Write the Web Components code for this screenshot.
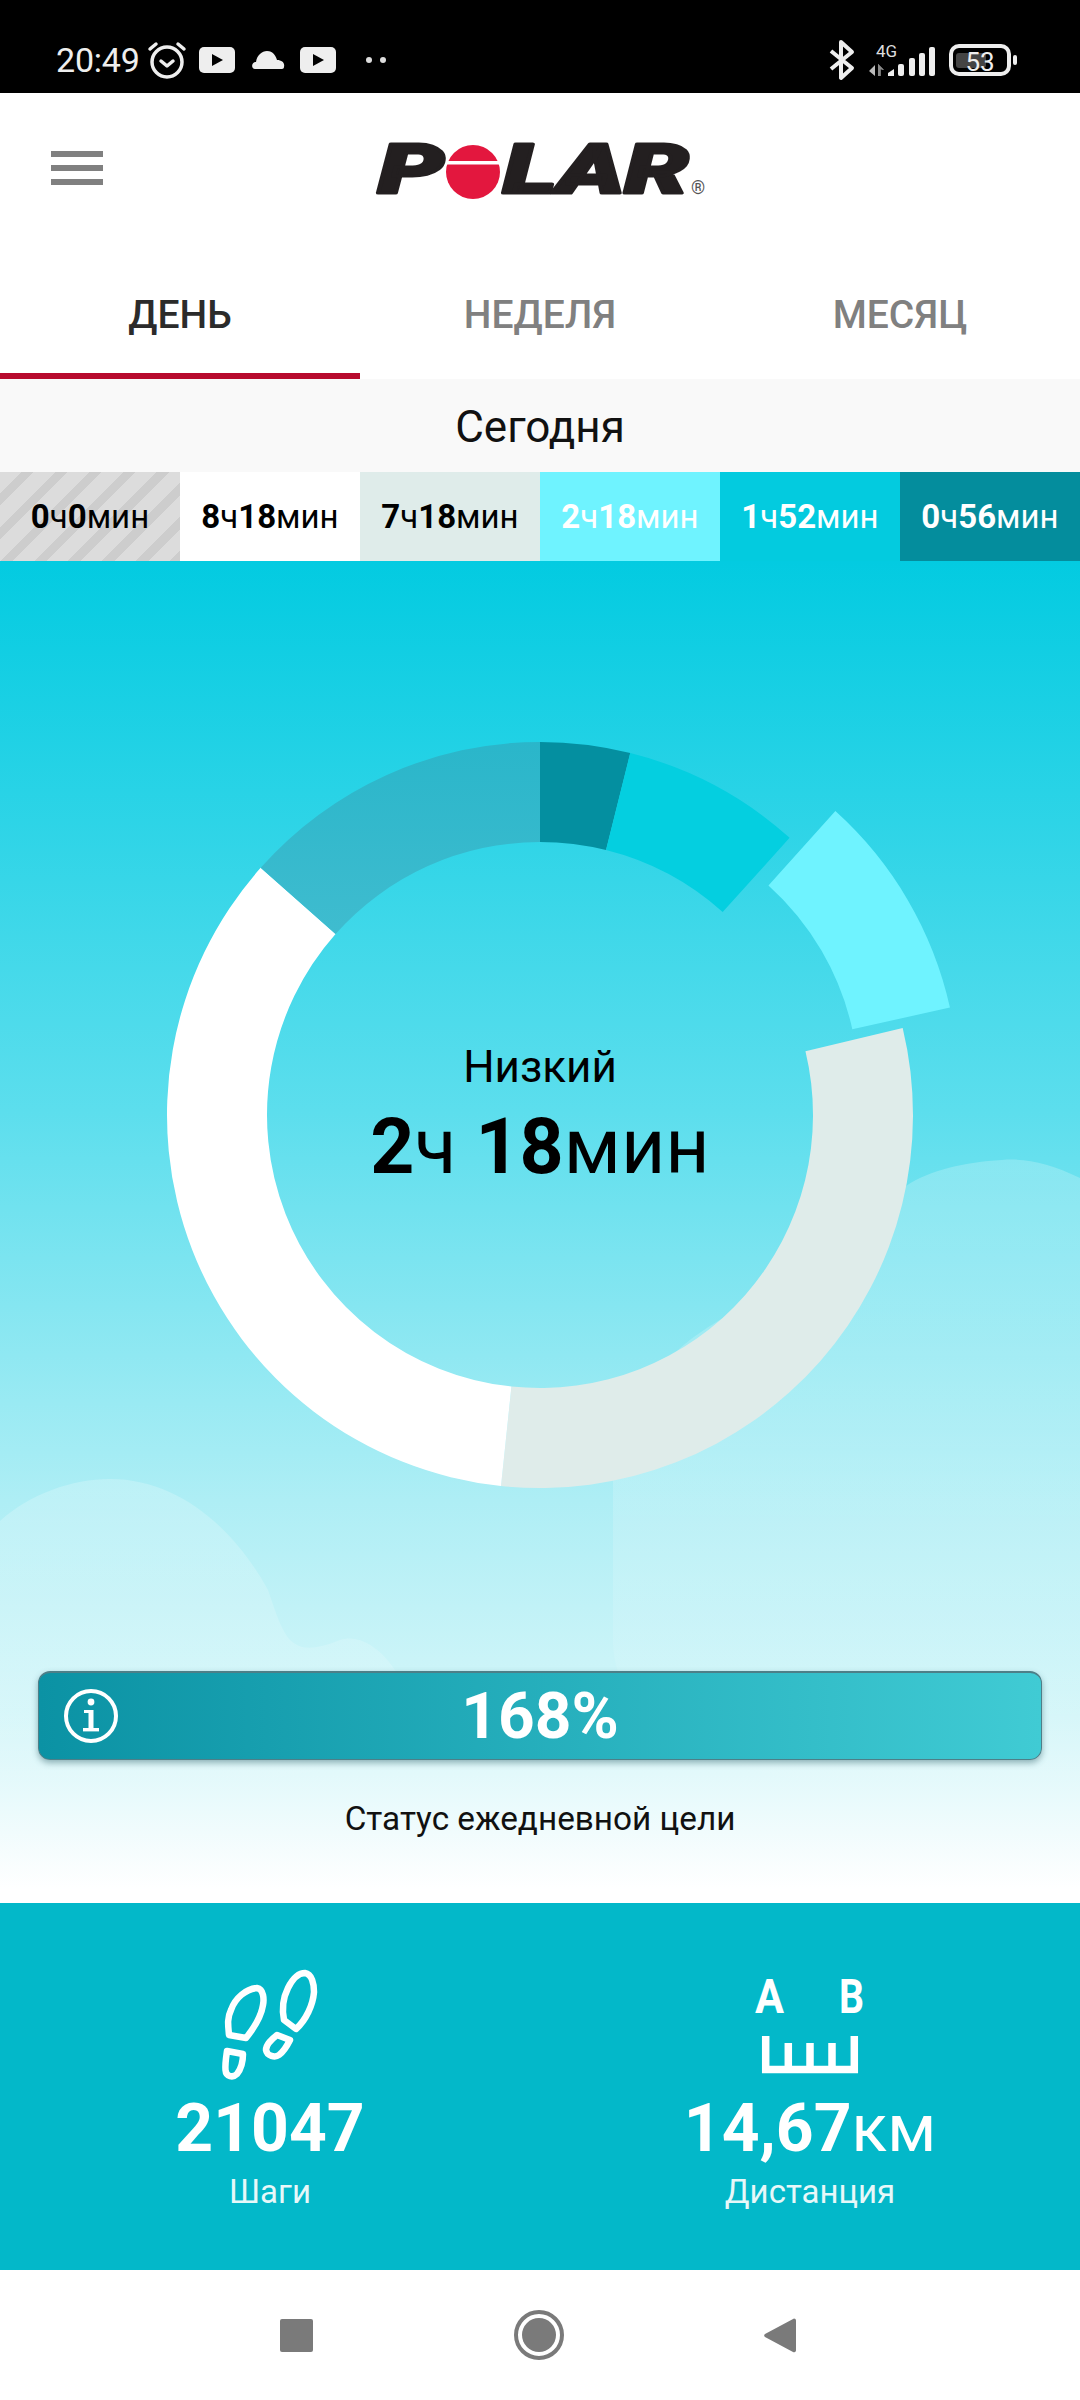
<!DOCTYPE html>
<html lang="ru">
<head>
<meta charset="utf-8">
<title>Polar</title>
<style>
    html, body { margin: 0; padding: 0; background: #fff; }
    body {
        width: 1080px;
        height: 2400px;
        display: flex;
        flex-direction: column;
        overflow: hidden;
        font-family: Roboto, "Noto Sans", sans-serif;
    }
</style>
</head>
<body>
<status-bar></status-bar>
<app-header></app-header>
<range-tabs>
    <range-tab active>ДЕНЬ</range-tab>
    <range-tab>НЕДЕЛЯ</range-tab>
    <range-tab>МЕСЯЦ</range-tab>
</range-tabs>
<day-label>Сегодня</day-label>
<zone-strip>
    <zone-cell kind="none" hours="0" minutes="0"></zone-cell>
    <zone-cell kind="rest" hours="8" minutes="18"></zone-cell>
    <zone-cell kind="sit" hours="7" minutes="18"></zone-cell>
    <zone-cell kind="low" hours="2" minutes="18"></zone-cell>
    <zone-cell kind="mid" hours="1" minutes="52"></zone-cell>
    <zone-cell kind="high" hours="0" minutes="56"></zone-cell>
</zone-strip>
<activity-panel>
    <zone-ring label="Низкий" hours="2" minutes="18"></zone-ring>
    <goal-bar value="168%">Статус ежедневной цели</goal-bar>
</activity-panel>
<stats-panel>
    <stat-item label="Шаги" value="21047">
        <svg slot="icon" width="140" height="140" viewBox="0 0 140 140" fill="none" stroke="#fff" stroke-width="6.5" stroke-linejoin="round">
            <path d="M29 75C28 65 27 58 31 50C35 38 46 29 57 28C64 29 64 40 63 45C61 58 54 68 46 78Z"/>
            <path d="M27 91L43 94C43 103 41 109 37 114C33 118 26 117 25.5 110C25 104 26 98 27 91Z"/>
            <path d="M84 60C82 50 83 38 88 28C93 18 99 13 105 13C112 14 114 24 114 32C113 45 106 60 96 69Z"/>
            <path d="M77 75L90 80C87 86 83 92 79 95C75 98 67 96 66 90C66 84 72 79 77 75Z"/>
        </svg>
    </stat-item>
    <stat-item label="Дистанция" value="14,67" unit="км">
        <svg slot="icon" width="140" height="140" viewBox="0 0 140 140" fill="none" stroke="#fff" stroke-width="7.5">
            <text x="0" y="53" transform="translate(15 0) scale(.88 1)" font-family="Roboto, sans-serif" font-weight="700" font-size="49" fill="#fff" stroke="none">A</text>
            <text x="0" y="53" transform="translate(99 0) scale(.8 1)" font-family="Roboto, sans-serif" font-weight="700" font-size="49" fill="#fff" stroke="none">B</text>
            <path d="M25.700 76V109.500H114.300V76M48.300 83V109M70 83V109M92 83V109"/>
        </svg>
    </stat-item>
</stats-panel>
<nav-bar></nav-bar>

<script>
customElements.define('status-bar', class extends HTMLElement {
    constructor() {
        super();
        const shadow_root = this.attachShadow({ mode: 'open' });
        shadow_root.innerHTML = `
            <style>
                :host {
                    display: flex;
                    align-items: center;
                    height: 93px;
                    padding: 26px 63px 0 56px;
                    box-sizing: border-box;
                    background: #000;
                    color: #eee;
                    flex: none;
                }
                svg { display: block; flex: none; }
                .time { font-size: 34px; letter-spacing: -.2px; margin-right: 6px; }
                .gap { flex: 1; }
            </style>
            <span class="time">20:49</span>
            <svg width="42" height="42" viewBox="0 0 42 42" fill="none" stroke="#eee" stroke-width="3.5" stroke-linecap="round">
                <circle cx="21" cy="23" r="15"/>
                <path d="M15 22l6 5 6-5M4 10l6-5M38 10l-6-5" stroke-linejoin="round"/>
            </svg>
            <svg width="36" height="26" viewBox="0 0 36 26" style="margin-left:11px">
                <rect width="36" height="26" rx="5" fill="#eee"/><path d="M13 7l11 6-11 6z" fill="#000"/>
            </svg>
            <svg width="34" height="20" viewBox="0 0 34 20" style="margin-left:16px">
                <path d="M4 19C0 19 0 12 5 12C6 5 11 1 16 1C22 1 25 6 26 10C31 10 34 13 33 17C33 18 32 19 31 19Z" fill="#eee"/>
            </svg>
            <svg width="36" height="26" viewBox="0 0 36 26" style="margin-left:15px">
                <rect width="36" height="26" rx="5" fill="#eee"/><path d="M13 7l11 6-11 6z" fill="#000"/>
            </svg>
            <svg width="22" height="8" viewBox="0 0 22 8" style="margin-left:29px">
                <circle cx="4" cy="4" r="3" fill="#ddd"/><circle cx="18" cy="4" r="3" fill="#ddd"/>
            </svg>
            <span class="gap"></span>
            <svg width="26" height="42" viewBox="0 0 26 42" fill="none" stroke="#eee" stroke-width="4" stroke-linejoin="round">
                <path d="M2 12L23 29L12 39V3L23 13L2 30"/>
            </svg>
            <svg width="72" height="36" viewBox="0 0 72 36" style="margin-left:11px">
                <text x="10" y="14.500" font-family="Roboto, sans-serif" font-size="17" fill="#ddd">4G</text>
                <path d="M9 23v11l-6-5zM12 22v12h2.500v-7l3.500 1z" fill="#bbb"/>
                <path d="M12 22v12h2.500v-7l3.500 1z" fill="#888"/>
                <g fill="#eee" transform="translate(0 2)">
                    <path d="M22 32v-3l6-4v7z"/>
                    <rect x="32" y="20" width="6" height="12" rx="2"/>
                    <rect x="43" y="14" width="6" height="18" rx="2"/>
                    <rect x="53" y="9" width="6" height="23" rx="2"/>
                    <rect x="63" y="3" width="6" height="29" rx="2"/>
                </g>
            </svg>
            <svg width="68" height="32" viewBox="0 0 68 32" style="margin-left:11px">
                <rect x="2" y="2" width="58" height="28" rx="8" fill="none" stroke="#eee" stroke-width="4"/>
                <rect x="7" y="9" width="30" height="15" rx="3" fill="#444"/>
                <rect x="64" y="11" width="4" height="10" rx="2" fill="#eee"/>
                <text x="31" y="27" text-anchor="middle" font-family="Roboto, sans-serif" font-size="26" fill="#eee">53</text>
            </svg>
        `;
    }
});

customElements.define('app-header', class extends HTMLElement {
    constructor() {
        super();
        const shadow_root = this.attachShadow({ mode: 'open' });
        shadow_root.innerHTML = `
            <style>
                :host {
                    display: block;
                    position: relative;
                    height: 154px;
                    background: #fff;
                    flex: none;
                }
                .menu {
                    display: flex;
                    flex-direction: column;
                    gap: 8px;
                    width: 52px;
                    padding: 58px 0 0 51px;
                }
                .menu i { display: block; height: 6px; background: #808080; }
                svg { position: absolute; left: 370px; top: 45px; overflow: visible; }
            </style>
            <div class="menu"><i></i><i></i><i></i></div>
            <svg width="345" height="70" viewBox="0 0 345 70" font-family="Roboto, sans-serif">
                <g fill="#231f20" stroke="#231f20" stroke-width="3" stroke-linejoin="round" font-size="68" font-weight="900" font-style="italic">
                    <text x="8" y="55" textLength="66" lengthAdjust="spacingAndGlyphs">P</text>
                    <text x="133" y="55" textLength="186" lengthAdjust="spacingAndGlyphs">LAR</text>
                </g>
                <circle cx="103" cy="34" r="27" fill="#e3173e"/>
                <rect x="76" y="23" width="54" height="3.500" fill="#fff"/>
                <text x="321" y="56" font-size="18" fill="#555">®</text>
            </svg>
        `;
    }
});

customElements.define('range-tabs', class extends HTMLElement {
    constructor() {
        super();
        const shadow_root = this.attachShadow({ mode: 'open' });
        shadow_root.innerHTML = `
            <style>
                :host {
                    display: grid;
                    grid-template-columns: repeat(3, 1fr);
                    height: 132px;
                    background: #fff;
                    flex: none;
                }
            </style>
            <slot></slot>
        `;
    }
});

customElements.define('range-tab', class extends HTMLElement {
    constructor() {
        super();
        const shadow_root = this.attachShadow({ mode: 'open' });
        shadow_root.innerHTML = `
            <style>
                :host {
                    display: flex;
                    justify-content: center;
                    padding-top: 43px;
                    box-sizing: border-box;
                    height: 132px;
                    font-size: 39px;
                    line-height: 50px;
                    font-weight: 500;
                    color: #808080;
                }
                :host([active]) {
                    color: #2b2b2b;
                    border-bottom: 6px solid #b70a2d;
                }
            </style>
            <slot></slot>
        `;
    }
});

customElements.define('day-label', class extends HTMLElement {
    constructor() {
        super();
        const shadow_root = this.attachShadow({ mode: 'open' });
        shadow_root.innerHTML = `
            <style>
                :host {
                    display: flex;
                    align-items: center;
                    justify-content: center;
                    height: 93px;
                    padding-top: 3px;
                    box-sizing: border-box;
                    background: #f9f9f9;
                    color: #111;
                    font-size: 44px;
                    flex: none;
                }
            </style>
            <slot></slot>
        `;
    }
});

customElements.define('zone-strip', class extends HTMLElement {
    constructor() {
        super();
        const shadow_root = this.attachShadow({ mode: 'open' });
        shadow_root.innerHTML = `
            <style>
                :host {
                    display: grid;
                    grid-template-columns: repeat(6, 1fr);
                    height: 89px;
                    flex: none;
                }
            </style>
            <slot></slot>
        `;
    }
});

customElements.define('zone-cell', class extends HTMLElement {
    constructor() {
        super();
        const shadow_root = this.attachShadow({ mode: 'open' });
        shadow_root.innerHTML = `
            <style>
                :host {
                    display: flex;
                    align-items: center;
                    justify-content: center;
                    font-size: 33px;
                    color: #000;
                }
                :host([kind="none"]) { background: repeating-linear-gradient(135deg, #dcdcdc 0 15px, #cdcdcd 15px 24px); }
                :host([kind="rest"]) { background: #fff; }
                :host([kind="sit"]) { background: #dfecea; }
                :host([kind="low"]) { background: #6ff3ff; color: #fff; }
                :host([kind="mid"]) { background: #03cbdf; color: #fff; }
                :host([kind="high"]) { background: #048d9d; color: #fff; }
                b { font-weight: 700; }
            </style>
            <span><b id="h"></b>ч<b id="m"></b>мин</span>
        `;
    }

    connectedCallback() {
        this.shadowRoot.querySelector('#h').textContent = this.getAttribute('hours');
        this.shadowRoot.querySelector('#m').textContent = this.getAttribute('minutes');
    }
});

customElements.define('activity-panel', class extends HTMLElement {
    constructor() {
        super();
        const shadow_root = this.attachShadow({ mode: 'open' });
        shadow_root.innerHTML = `
            <style>
                :host {
                    display: flex;
                    flex-direction: column;
                    position: relative;
                    height: 1342px;
                    padding-top: 119px;
                    box-sizing: border-box;
                    background: linear-gradient(#03cbe1 0, #5cdeed 41%, #aeeef5 70%, #d4f6f9 86%, #fff 99%);
                    overflow: hidden;
                    flex: none;
                }
                .clouds { position: absolute; left: 0; top: 0; }
                ::slotted(*) { position: relative; }
            </style>
            <svg class="clouds" width="1080" height="1342" viewBox="0 561 1080 1342">
                <defs>
                    <linearGradient id="fade" x1="0" y1="0" x2="0" y2="1">
                        <stop offset="0" stop-color="#fff" stop-opacity=".22"/>
                        <stop offset=".6" stop-color="#fff" stop-opacity=".15"/>
                        <stop offset="1" stop-color="#fff" stop-opacity="0"/>
                    </linearGradient>
                </defs>
                <path fill="url(#fade)" d="M1080 1178C1050 1163 1025 1158 1002 1160C965 1162 930 1170 906 1186C860 1230 790 1270 726 1316C700 1332 685 1342 668 1360C625 1400 613 1440 613 1483V1640C613 1720 700 1800 1080 1810Z"/>
                <path fill="url(#fade)" d="M0 1521C30 1494 72 1479 110 1479C180 1479 235 1530 268 1590C285 1640 290 1660 340 1640C370 1630 410 1670 420 1740C300 1790 100 1800 0 1790Z"/>
            </svg>
            <slot></slot>
        `;
    }
});

customElements.define('zone-ring', class extends HTMLElement {
    constructor() {
        super();
        const shadow_root = this.attachShadow({ mode: 'open' });
        shadow_root.innerHTML = `
            <style>
                :host {
                    display: grid;
                    height: 860px;
                    flex: none;
                }
                svg, .center { grid-area: 1 / 1; }
                svg { display: block; }
                .center {
                    display: flex;
                    flex-direction: column;
                    align-items: center;
                    justify-content: center;
                    color: #000;
                    padding-top: 14px;
                }
                .label { font-size: 44px; line-height: 50px; }
                .time { font-size: 77px; line-height: 90px; margin-top: 10px; }
                b { font-weight: 700; }
            </style>
            <svg width="1080" height="860" viewBox="0 0 1080 860">
                <defs>
                    <linearGradient id="rest" x1="0" y1="0" x2="0" y2="1">
                        <stop offset="0" stop-color="#2ab6ca"/>
                        <stop offset="1" stop-color="#3fbccf"/>
                    </linearGradient>
                </defs>
                <g id="arcs"></g>
            </svg>
            <div class="center">
                <div class="label"></div>
                <div class="time"><b id="h"></b>ч <b id="m"></b>мин</div>
            </div>
        `;
    }

    connectedCallback() {
        const root = this.shadowRoot;
        root.querySelector('.label').textContent = this.getAttribute('label');
        root.querySelector('#h').textContent = this.getAttribute('hours');
        root.querySelector('#m').textContent = this.getAttribute('minutes');

        // minutes of the day, clockwise from the top
        const parts = [
            { minutes: 56, fill: '#048fa0' },
            { minutes: 112, fill: '#04cfe0' },
            { minutes: 138, fill: '#6ff3ff', lift: 53, extra: 1 },
            { minutes: 438, fill: '#dfecea' },
            { minutes: 502, fill: '#fff' },
            { minutes: 194, fill: 'url(#rest)' },
        ];
        let start = 0;
        let html = '';
        for (const part of parts) {
            const end = start + part.minutes * 360 / 1440;
            html += this.arc(start, end + (part.extra || 0), part.fill, part.lift || 0);
            start = end;
        }
        root.querySelector('#arcs').innerHTML = html;
    }

    arc(start, end, fill, lift) {
        const R = 373, r = 273;
        const mid = (start + end) / 2 * Math.PI / 180;
        const cx = 540 + lift * Math.sin(mid);
        const cy = 435 - lift * Math.cos(mid);
        const pt = (rad, deg) => {
            const a = deg * Math.PI / 180;
            return (cx + rad * Math.sin(a)).toFixed(2) + ' ' + (cy - rad * Math.cos(a)).toFixed(2);
        };
        const big = end - start > 180 ? 1 : 0;
        return `<path fill="${fill}" d="M${pt(R, start)}A${R} ${R} 0 ${big} 1 ${pt(R, end)}L${pt(r, end)}A${r} ${r} 0 ${big} 0 ${pt(r, start)}Z"/>`;
    }
});

customElements.define('goal-bar', class extends HTMLElement {
    constructor() {
        super();
        const shadow_root = this.attachShadow({ mode: 'open' });
        shadow_root.innerHTML = `
            <style>
                :host {
                    display: flex;
                    flex-direction: column;
                    margin: 131px 38px 0;
                    flex: none;
                }
                .bar {
                    display: flex;
                    align-items: center;
                    justify-content: center;
                    position: relative;
                    height: 89px;
                    box-sizing: border-box;
                    border-radius: 12px;
                    border: 1px solid #4e7f88;
                    border-top-width: 2px;
                    background: linear-gradient(90deg, #0b92a4, #40cbd4);
                    box-shadow: 0 3px 6px rgba(40, 90, 100, .45);
                    color: #fff;
                    font-size: 64px;
                    font-weight: 700;
                }
                svg { position: absolute; left: 24px; top: 15px; }
                .caption {
                    text-align: center;
                    margin-top: 39px;
                    font-size: 33.300px;
                    line-height: 40px;
                    color: #111;
                }
            </style>
            <div class="bar">
                <svg width="56" height="56" viewBox="0 0 56 56" fill="#fff">
                    <circle cx="28" cy="28" r="25" fill="none" stroke="#fff" stroke-width="4"/>
                    <circle cx="28" cy="14" r="3.400"/>
                    <rect x="25.500" y="22" width="5" height="20"/>
                    <rect x="21" y="22" width="8" height="3"/>
                    <rect x="20" y="40" width="16" height="3.400"/>
                </svg>
                <span id="value"></span>
            </div>
            <div class="caption"><slot></slot></div>
        `;
    }

    connectedCallback() {
        this.shadowRoot.querySelector('#value').textContent = this.getAttribute('value');
    }
});

customElements.define('stats-panel', class extends HTMLElement {
    constructor() {
        super();
        const shadow_root = this.attachShadow({ mode: 'open' });
        shadow_root.innerHTML = `
            <style>
                :host {
                    display: grid;
                    grid-template-columns: 1fr 1fr;
                    height: 367px;
                    padding-top: 57px;
                    box-sizing: border-box;
                    background: #03b8c9;
                    flex: none;
                }
            </style>
            <slot></slot>
        `;
    }
});

customElements.define('stat-item', class extends HTMLElement {
    constructor() {
        super();
        const shadow_root = this.attachShadow({ mode: 'open' });
        shadow_root.innerHTML = `
            <style>
                :host {
                    display: flex;
                    flex-direction: column;
                    align-items: center;
                    color: #fff;
                }
                .value { font-size: 66px; line-height: 76px; font-weight: 700; margin-top: -9px; }
                .unit { font-weight: 400; }
                .label { font-size: 33px; line-height: 40px; margin-top: 5px; opacity: .9; }
                ::slotted(svg) { display: block; }
            </style>
            <slot name="icon"></slot>
            <div class="value"><span id="value"></span><span class="unit" id="unit"></span></div>
            <div class="label" id="label"></div>
        `;
    }

    connectedCallback() {
        const root = this.shadowRoot;
        root.querySelector('#value').textContent = this.getAttribute('value');
        root.querySelector('#unit').textContent = this.getAttribute('unit') || '';
        root.querySelector('#label').textContent = this.getAttribute('label');
    }
});

customElements.define('nav-bar', class extends HTMLElement {
    constructor() {
        super();
        const shadow_root = this.attachShadow({ mode: 'open' });
        shadow_root.innerHTML = `
            <style>
                :host {
                    display: flex;
                    align-items: center;
                    height: 130px;
                    padding: 0 284px 0 280px;
                    justify-content: space-between;
                    box-sizing: border-box;
                    background: #fff;
                    flex: none;
                }
                svg { display: block; }
            </style>
            <svg width="33" height="33" viewBox="0 0 33 33"><rect width="33" height="33" rx="2" fill="#7a7a7a"/></svg>
            <svg width="50" height="50" viewBox="0 0 50 50">
                <circle cx="25" cy="25" r="23" fill="none" stroke="#7a7a7a" stroke-width="4"/>
                <circle cx="25" cy="25" r="17" fill="#7a7a7a"/>
            </svg>
            <svg width="32" height="37" viewBox="0 0 32 37">
                <path d="M30 1.500a2 2 0 0 1 2 2v30a2 2 0 0 1-3 1.500L1 20a2 2 0 0 1 0-3z" fill="#7a7a7a"/>
            </svg>
        `;
    }
});
</script>
</body>
</html>
